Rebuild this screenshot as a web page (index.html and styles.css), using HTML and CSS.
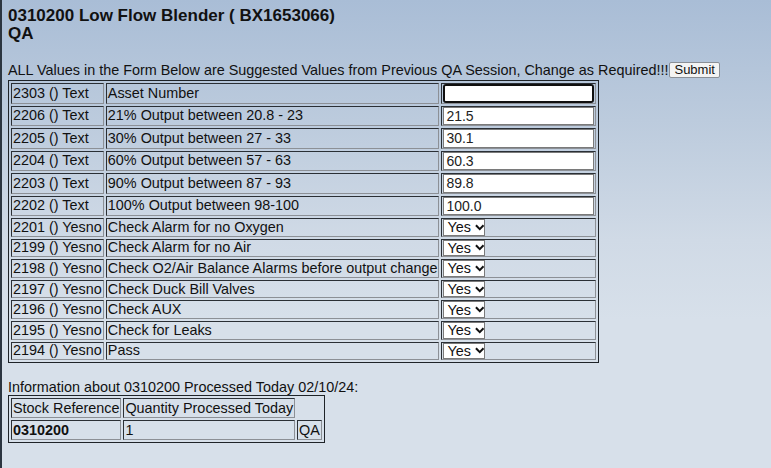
FILE: index.html
```html
<!DOCTYPE html>
<html>
<head>
<meta charset="utf-8">
<link rel="stylesheet" href="styles.css">
</head>
<body>
<div class="title">0310200 Low Flow Blender ( BX1653066)<br>QA</div>
<form class="qa-form">
<div class="intro">ALL Values in the Form Below are Suggested Values from Previous QA Session, Change as Required!!!<button type="button" class="submit">Submit</button></div>
<table class="grid">
<tr class="trow"><td>2303 () Text</td><td>Asset Number</td><td><input class="txt focus" type="text" value=""></td></tr>
<tr class="trow"><td>2206 () Text</td><td>21% Output between 20.8 - 23</td><td><input class="txt" type="text" value="21.5"></td></tr>
<tr class="trow"><td>2205 () Text</td><td>30% Output between 27 - 33</td><td><input class="txt" type="text" value="30.1"></td></tr>
<tr class="trow"><td>2204 () Text</td><td>60% Output between 57 - 63</td><td><input class="txt" type="text" value="60.3"></td></tr>
<tr class="trow"><td>2203 () Text</td><td>90% Output between 87 - 93</td><td><input class="txt" type="text" value="89.8"></td></tr>
<tr class="trow"><td>2202 () Text</td><td>100% Output between 98-100</td><td><input class="txt" type="text" value="100.0"></td></tr>
<tr class="srow"><td>2201 () Yesno</td><td>Check Alarm for no Oxygen</td><td><span class="sel"><span class="sel-val">Yes</span><svg class="chev" viewBox="0 0 10 7" width="10" height="7"><path d="M1 1.2 L5 5.2 L9 1.2" fill="none" stroke="#111" stroke-width="2.2"/></svg></span></td></tr>
<tr class="srow"><td>2199 () Yesno</td><td>Check Alarm for no Air</td><td><span class="sel"><span class="sel-val">Yes</span><svg class="chev" viewBox="0 0 10 7" width="10" height="7"><path d="M1 1.2 L5 5.2 L9 1.2" fill="none" stroke="#111" stroke-width="2.2"/></svg></span></td></tr>
<tr class="srow"><td>2198 () Yesno</td><td>Check O2/Air Balance Alarms before output change</td><td><span class="sel"><span class="sel-val">Yes</span><svg class="chev" viewBox="0 0 10 7" width="10" height="7"><path d="M1 1.2 L5 5.2 L9 1.2" fill="none" stroke="#111" stroke-width="2.2"/></svg></span></td></tr>
<tr class="srow"><td>2197 () Yesno</td><td>Check Duck Bill Valves</td><td><span class="sel"><span class="sel-val">Yes</span><svg class="chev" viewBox="0 0 10 7" width="10" height="7"><path d="M1 1.2 L5 5.2 L9 1.2" fill="none" stroke="#111" stroke-width="2.2"/></svg></span></td></tr>
<tr class="srow"><td>2196 () Yesno</td><td>Check AUX</td><td><span class="sel"><span class="sel-val">Yes</span><svg class="chev" viewBox="0 0 10 7" width="10" height="7"><path d="M1 1.2 L5 5.2 L9 1.2" fill="none" stroke="#111" stroke-width="2.2"/></svg></span></td></tr>
<tr class="srow"><td>2195 () Yesno</td><td>Check for Leaks</td><td><span class="sel"><span class="sel-val">Yes</span><svg class="chev" viewBox="0 0 10 7" width="10" height="7"><path d="M1 1.2 L5 5.2 L9 1.2" fill="none" stroke="#111" stroke-width="2.2"/></svg></span></td></tr>
<tr class="srow"><td>2194 () Yesno</td><td>Pass</td><td><span class="sel"><span class="sel-val">Yes</span><svg class="chev" viewBox="0 0 10 7" width="10" height="7"><path d="M1 1.2 L5 5.2 L9 1.2" fill="none" stroke="#111" stroke-width="2.2"/></svg></span></td></tr>
</table>
</form>
<div class="info">Information about 0310200 Processed Today 02/10/24:</div>
<table class="grid stock">
<tr><td>Stock Reference</td><td>Quantity Processed Today</td></tr>
<tr><td class="bold">0310200</td><td>1</td><td>QA</td></tr>
</table>
</body>
</html>
```
FILE: styles.css
```css
html {
  min-height: 100%;
  background: linear-gradient(to bottom, #a9bdd6 0px, #bccbdd 120px, #d0dae6 240px, #d7e0ea 320px, #d7e0ea 100%);
  border-left: 2px solid #2b3540;
}
body {
  margin: 0;
  padding: 7px 0 0 6px;
  font-family: "Liberation Sans", Arial, sans-serif;
  font-size: 14.4px;
  color: #111;
}
.title {
  font-size: 17px;
  font-weight: bold;
  line-height: 18px;
  margin: 0 0 19px 0;
}
.qa-form {
  margin: 0;
}
.intro {
  line-height: 16px;
  height: 18px;
  display: flex;
  align-items: flex-start;
}
.submit {
  font-family: "Liberation Sans", Arial, sans-serif;
  font-size: 13px;
  height: 16px;
  padding: 0 4px;
  margin: 0 0 0 1px;
  line-height: 14px;
  border: 1px solid #8a8f96;
  border-radius: 2px;
  background: #f3f3f3;
  color: #111;
}
.grid {
  border: 1px solid #1e2328;
  border-spacing: 2px;
  border-collapse: separate;
}
.grid td {
  border: 1px solid;
  border-color: #2a2f35 #8c9096 #8c9096 #2a2f35;
  padding: 0 1px;
  line-height: 15px;
  white-space: nowrap;
  vertical-align: middle;
}
.trow td {
  height: 18.5px;
}
.srow td {
  height: 16.6px;
}
.txt {
  box-sizing: border-box;
  width: 151px;
  height: 18.5px;
  margin: 0;
  padding: 0 2px;
  border: 1px solid #7a7a7a;
  background: #fff;
  font-family: "Liberation Sans", Arial, sans-serif;
  font-size: 14px;
  color: #222;
  display: block;
}
.txt.focus {
  border: 2px solid #101010;
  border-radius: 3px;
  outline: 1px solid #fff;
  outline-offset: -3px;
}
.sel {
  display: flex;
  align-items: center;
  box-sizing: border-box;
  width: 42px;
  height: 16.6px;
  border: 1px solid #7a7a7a;
  background: #fff;
  padding: 0 0 0 3px;
  gap: 4px;
}
.sel-val {
  line-height: 14px;
}
.chev {
  display: block;
}
.info {
  margin-top: 16px;
  line-height: 16px;
}
.stock td {
  padding: 0 1px;
  height: 18px;
  line-height: 16px;
}
.bold {
  font-weight: bold;
}
```
